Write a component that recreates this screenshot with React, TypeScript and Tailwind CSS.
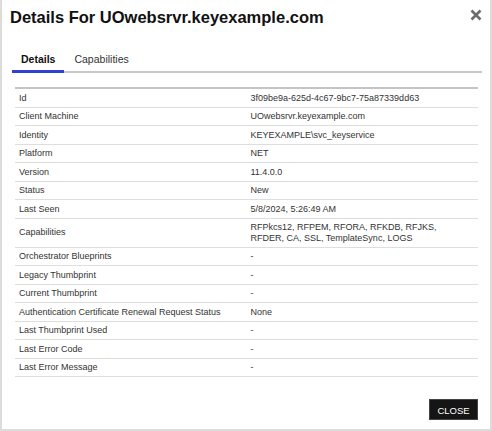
import React from "react";

type Row = { label: string; value: React.ReactNode };

const rows: Row[] = [
  { label: "Id", value: "3f09be9a-625d-4c67-9bc7-75a87339dd63" },
  { label: "Client Machine", value: "UOwebsrvr.keyexample.com" },
  { label: "Identity", value: "KEYEXAMPLE\\svc_keyservice" },
  { label: "Platform", value: "NET" },
  { label: "Version", value: "11.4.0.0" },
  { label: "Status", value: "New" },
  { label: "Last Seen", value: "5/8/2024, 5:26:49 AM" },
  {
    label: "Capabilities",
    value: (
      <>
        RFPkcs12, RFPEM, RFORA, RFKDB, RFJKS,
        <br />
        RFDER, CA, SSL, TemplateSync, LOGS
      </>
    ),
  },
  { label: "Orchestrator Blueprints", value: "-" },
  { label: "Legacy Thumbprint", value: "-" },
  { label: "Current Thumbprint", value: "-" },
  { label: "Authentication Certificate Renewal Request Status", value: "None" },
  { label: "Last Thumbprint Used", value: "-" },
  { label: "Last Error Code", value: "-" },
  { label: "Last Error Message", value: "-" },
];

const App: React.FC = () => {
  return (
    <div
      className="w-[492px] h-[431px] bg-white border-x-2 border-b-2 border-[#dcdcdc] flex flex-col text-[#333]"
      style={{ fontFamily: '"Liberation Sans", Arial, sans-serif' }}
    >
      {/* header */}
      <div className="flex items-start justify-between pl-[8px] pr-[8px] pt-[6px]">
        <h1 className="text-[16.5px] leading-[22px] font-bold text-[#111]">
          Details For UOwebsrvr.keyexample.com
        </h1>
        <button className="mt-[3px] w-[12px] h-[12px] flex items-center justify-center">
          <svg width="12" height="12" viewBox="0 0 12 12">
            <path d="M1.5 1.5 L10.5 10.5 M10.5 1.5 L1.5 10.5" stroke="#6b6b6b" strokeWidth="2.6" />
          </svg>
        </button>
      </div>

      {/* tabs */}
      <div className="mt-[18px] ml-[10px] mr-[8px] flex border-b-2 border-[#c8c8c8]">
        <div className="px-[9px] pt-[7px] pb-[4px] leading-[13px] text-[10.5px] font-bold text-[#111] border-b-[3px] border-[#3340d6] -mb-[2px]">
          Details
        </div>
        <div className="px-[10px] pt-[7px] pb-[4px] leading-[13px] text-[10.5px] text-[#333]">
          Capabilities
        </div>
      </div>

      {/* details table */}
      <table className="mt-[14px] ml-[13px] w-[463px] border-t-2 border-[#c4c4c4] text-[9px] table-fixed border-collapse">
        <tbody>
          {rows.map((r) => (
            <tr key={r.label} className="border-b border-[#dedede]">
              <td className="w-1/2 px-[4px] py-[3.5px] leading-[10.5px] align-middle">{r.label}</td>
              <td className="w-1/2 px-[4px] py-[3.5px] leading-[10.5px] align-middle">{r.value}</td>
            </tr>
          ))}
        </tbody>
      </table>

      <div className="flex-1" />

      {/* footer */}
      <div className="flex justify-end pr-[12px] pb-[9px]">
        <button className="w-[49px] h-[21px] bg-[#151515] text-white text-[9.5px] leading-[21px] border border-[#444]">
          CLOSE
        </button>
      </div>
    </div>
  );
};

export default App;
